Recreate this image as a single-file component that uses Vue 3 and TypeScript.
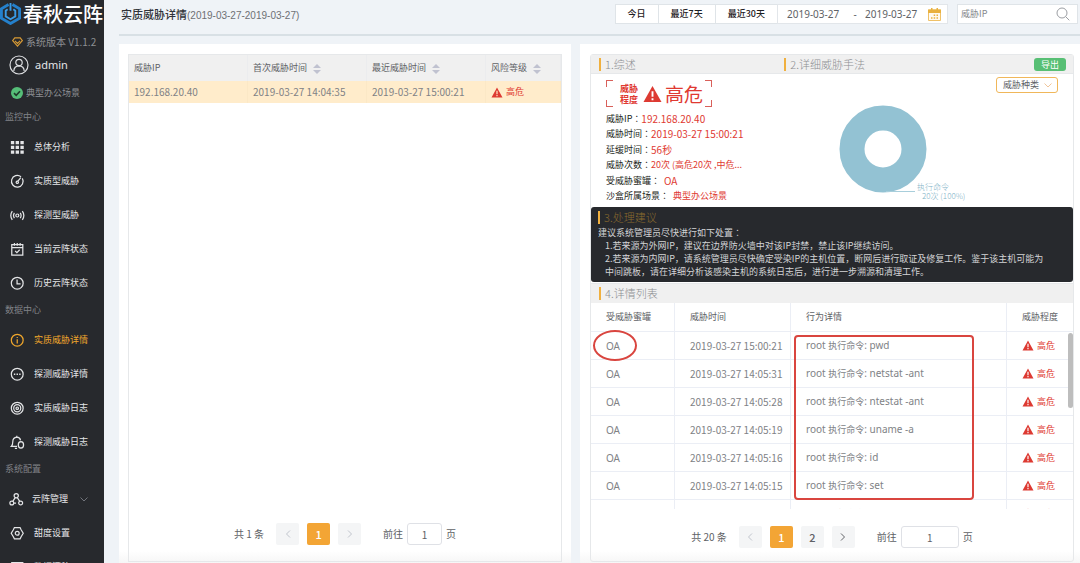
<script setup lang="ts">
import { ref } from 'vue'

interface MenuItem {
  text: string
  lines?: string
  solid?: string
  active?: boolean
  expandable?: boolean
}

interface MenuGroup {
  label: string
  items: MenuItem[]
}

const groups: MenuGroup[] = [
  {
    label: '监控中心',
    items: [
      {
        text: '总体分析',
        solid:
          'M1 1h3.8v3.8H1zM6.4 1h3.8v3.8H6.400zM11.8 1h3.8v3.8h-3.800zM1 6.400h3.8v3.800H1zM6.400 6.400h3.800v3.800H6.400zM11.800 6.400h3.800v3.800h-3.800zM1 11.800h3.800v3.800H1zM6.400 11.800h3.800v3.800H6.400zM11.800 11.800h3.800v3.800h-3.800z',
      },
      {
        text: '实质型威胁',
        lines:
          'M12.5 3.2A6.6 6.6 0 1 0 14 5M7 9.2a1.3 1.3 0 1 0 2.4-.4 1.3 1.3 0 0 0-2.4.4M9 8l3.2-4',
      },
      {
        text: '探测型威胁',
        lines:
          'M6.6 8.5a1.7 1.7 0 1 0 3.4 0 1.7 1.7 0 0 0-3.4 0M5 5.5Q3 8.5 5 11.5M11.6 5.5q2 3 0 6M2.6 3.6Q-.8 8.5 2.6 13.4M14 3.6q3.4 4.9 0 9.8',
      },
      {
        text: '当前云阵状态',
        lines: 'M2 3h12.5v11.8H2zM2 6.3h12.5M5 1.2v3M8.2 1.2v3M11.5 1.2v3M5.8 10l2 2 3.2-3.2',
      },
      {
        text: '历史云阵状态',
        lines: 'M1.5 8.2a6.7 6.7 0 1 0 13.4 0 6.7 6.7 0 0 0-13.4 0M8 4v4.8h4',
      },
    ],
  },
  {
    label: '数据中心',
    items: [
      {
        text: '实质威胁详情',
        active: true,
        lines: 'M1.5 8.2a6.7 6.7 0 1 0 13.4 0 6.7 6.7 0 0 0-13.4 0M8.2 7v5M8.2 4.4v1.4',
      },
      {
        text: '探测威胁详情',
        lines: 'M1.5 8.2a6.7 6.7 0 1 0 13.4 0 6.7 6.7 0 0 0-13.4 0',
        solid: 'M4.4 7.4H6V9H4.4zM7.4 7.4H9V9H7.4zM10.4 7.4H12V9h-1.6z',
      },
      {
        text: '实质威胁日志',
        lines:
          'M1.5 8.2a6.7 6.7 0 1 0 13.4 0 6.7 6.7 0 0 0-13.4 0M4.2 8.2a4 4 0 1 0 8 0 4 4 0 0 0-8 0M6.8 8.2a1.4 1.4 0 1 0 2.8 0 1.4 1.4 0 0 0-2.8 0',
      },
      {
        text: '探测威胁日志',
        lines:
          'M8 13H1.5Q3.2 11.500 3.2 7.500q0-4.500 4.500-5 3.600.2 4.300 3.500M7.700 2.500V.8M5.500 15.200h2.500M12.400 7.600q3 .2 3 3.600t-3 3.600q-3-.2-3-3.600t3-3.600',
      },
    ],
  },
  {
    label: '系统配置',
    items: [
      {
        text: '云阵管理',
        expandable: true,
        lines:
          'M5.8 4.200a2.400 2.400 0 1 0 4.800 0 2.400 2.400 0 0 0-4.800 0M1 12.500a2.200 2.200 0 1 0 4.400 0 2.200 2.200 0 0 0-4.400 0M11 12.500a2.200 2.200 0 1 0 4.400 0 2.200 2.200 0 0 0-4.400 0M7 6.300 4.300 10.600M9.400 6.300l2.800 4.300M5.400 12.500h2.600',
      },
      {
        text: '甜度设置',
        lines:
          'M5 1.8h6.4l1.2 2.4 2.4 4-2.4 4-1.2 2.4H5l-1.2-2.4-2.4-4 2.4-4zM6 8.2a2.2 2.2 0 1 0 4.4 0 2.2 2.2 0 0 0-4.4 0',
      },
      { text: '数据漂移', lines: 'M2 3h12.5v11H2zM5 7h6' },
    ],
  },
]

const ranges = ['今日', '最近7天', '最近30天']
const startDate = ref('2019-03-27')
const endDate = ref('2019-03-27')
const keyword = ref('')
const leftPage = ref('1')
const rightPage = ref('1')

const threats = [
  { ip: '192.168.20.40', first: '2019-03-27 14:04:35', last: '2019-03-27 15:00:21', level: '高危' },
]

const summary = [
  { label: '威胁IP', value: '192.168.20.40' },
  { label: '威胁时间', value: '2019-03-27 15:00:21' },
  { label: '延缓时间', value: '56秒' },
  { label: '威胁次数', value: '20次 (高危20次 ,中危...', cn: true },
  { label: '受威胁蜜罐', value: 'OA', spaced: true },
  { label: '沙盒所属场景', value: '典型办公场景', cn: true, spaced: true },
]

const details = [
  { time: '2019-03-27 15:00:21', cmd: 'pwd' },
  { time: '2019-03-27 14:05:31', cmd: 'netstat -ant' },
  { time: '2019-03-27 14:05:28', cmd: 'ntestat -ant' },
  { time: '2019-03-27 14:05:19', cmd: 'uname -a' },
  { time: '2019-03-27 14:05:16', cmd: 'id' },
  { time: '2019-03-27 14:05:15', cmd: 'set' },
  { time: '2019-03-27 14:05:12', cmd: 'ls' },
]

const warnShape = 'M10 1 19.5 18H.5zM9 6.5v6h2v-6zM9 14v2h2v-2z'
</script>

<template>
  <div class="app">
    <aside class="sidebar">
      <div class="logo">
        <svg class="logo-mark" viewBox="0 0 22 24" aria-hidden="true">
          <path d="M9 2.500 1.500 7v10l9.500 5.500L20.500 17V7L13 2.500" fill="none" stroke="#2480cc" stroke-width="3" />
          <path d="M8 7.500 6 9v6l5 3 5-3V9l-2-1.500M11 1v8" fill="none" stroke="#3a9be6" stroke-width="2" />
        </svg>
        <span>春秋云阵</span>
      </div>
      <div class="version">
        <svg class="gem" viewBox="0 0 12 11" fill="none" stroke="#d79a35" stroke-width="1.300" aria-hidden="true">
          <path d="M3 1h6l2.300 3L6 10 .7 4zM3.200 4.200 6 7l2.800-2.800" />
        </svg>
        <span>系统版本 V1.1.2</span>
      </div>
      <div class="user">
        <svg class="avatar" viewBox="0 0 20 20" fill="none" stroke="#dcdde0" stroke-width="1.200" aria-hidden="true">
          <circle cx="10" cy="10" r="9" />
          <circle cx="10" cy="7.500" r="3.200" />
          <path d="M4.800 16q.2-5 5.200-5.200 5 .2 5.200 5.200" />
        </svg>
        <span>admin</span>
      </div>
      <div class="scene">
        <svg class="tick" viewBox="0 0 12 12" aria-hidden="true">
          <circle cx="6" cy="6" r="6" fill="#55be78" />
          <path d="m3 6.200 2.200 2.100L9 4.200" fill="none" stroke="#1f3a2a" stroke-width="1.600" />
        </svg>
        <span>典型办公场景</span>
      </div>
      <nav>
        <template v-for="g in groups" :key="g.label">
          <div class="group-label">{{ g.label }}</div>
          <a
            v-for="m in g.items"
            :key="m.text"
            href="#"
            class="menu-item"
            :class="{ active: m.active, expandable: m.expandable }"
          >
            <svg class="menu-icon" viewBox="0 0 17 17" aria-hidden="true">
              <path v-if="m.lines" :d="m.lines" fill="none" stroke="currentColor" stroke-width="1.400" />
              <path v-if="m.solid" :d="m.solid" fill="currentColor" />
            </svg>
            <span>{{ m.text }}</span>
            <svg v-if="m.expandable" class="fold" viewBox="0 0 8 5" fill="none" stroke="#71747b" aria-hidden="true">
              <path d="m.5.5 3.500 3.500L7.500.5" />
            </svg>
          </a>
        </template>
      </nav>
    </aside>

    <main class="main">
      <header class="topbar">
        <h1>实质威胁详情<span>(2019-03-27-2019-03-27)</span></h1>
        <div class="tools">
          <div class="ranges">
            <button v-for="r in ranges" :key="r" type="button">{{ r }}</button>
          </div>
          <div class="dates">
            <input v-model="startDate" type="text" aria-label="开始日期" />
            <span>-</span>
            <input v-model="endDate" type="text" aria-label="结束日期" />
            <button type="button" aria-label="选择日期">
              <svg viewBox="0 0 13 13" aria-hidden="true">
                <path d="M.5 2h12v10.500H.5z" fill="#fffaf0" stroke="#efc168" />
                <path d="M0 1.500h13V5H0zM3 0h1.500v2H3zM8.500 0H10v2H8.500z" fill="#e9b13f" />
                <path d="M8.500 6.500H10V8H8.500zM5.700 6.500h1.500V8H5.700zM3 9.200h1.500v1.500H3zM5.700 9.200h1.500v1.500H5.700zM8.500 9.200H10v1.500H8.500z" fill="#e9b13f" />
              </svg>
            </button>
          </div>
          <div class="search">
            <input v-model="keyword" type="text" placeholder="威胁IP" aria-label="威胁IP" />
            <button type="button" aria-label="搜索">
              <svg viewBox="0 0 14 14" fill="none" stroke="#9b9ea3" aria-hidden="true">
                <circle cx="6" cy="6" r="5" />
                <path d="m9.700 9.700 3.600 3.600" />
              </svg>
            </button>
          </div>
        </div>
      </header>

      <div class="columns">
        <section class="card">
          <div class="box">
            <table class="threats">
              <thead>
                <tr>
                  <th>威胁IP</th>
                  <th v-for="h in ['首次威胁时间', '最近威胁时间', '风险等级']" :key="h">
                    {{ h }}
                    <svg class="sort" viewBox="0 0 8 10" fill="#c0c2d0" aria-hidden="true">
                      <path d="M4 0 8 4H0zM4 10 0 6h8z" />
                    </svg>
                  </th>
                </tr>
              </thead>
              <tbody>
                <tr v-for="t in threats" :key="t.ip">
                  <td>{{ t.ip }}</td>
                  <td>{{ t.first }}</td>
                  <td>{{ t.last }}</td>
                  <td>
                    <span class="level">
                      <svg viewBox="0 0 20 19" aria-hidden="true"><path :d="warnShape" fill-rule="evenodd" /></svg>{{ t.level }}
                    </span>
                  </td>
                </tr>
              </tbody>
            </table>
            <div class="pager">
              <span class="total">共 1 条</span>
              <button type="button" disabled aria-label="上一页">
                <svg viewBox="0 0 6 8" aria-hidden="true"><path d="M5 .5 1.500 4 5 7.500" /></svg>
              </button>
              <button type="button" class="current">1</button>
              <button type="button" disabled aria-label="下一页">
                <svg viewBox="0 0 6 8" aria-hidden="true"><path d="M1 .5 4.500 4 1 7.500" /></svg>
              </button>
              <label class="jump">前往<input v-model="leftPage" type="text" />页</label>
            </div>
          </div>
        </section>

        <section class="card">
          <div class="box framed">
            <div class="overview-head">
              <h2>1.综述</h2>
              <h2>2.详细威胁手法</h2>
              <button type="button" class="export">导出</button>
            </div>
            <div class="overview">
              <div class="facts">
                <div class="badge">
                  <i class="corner tl"></i><i class="corner tr"></i><i class="corner bl"></i><i class="corner br"></i>
                  <span class="badge-label">威胁<br />程度</span>
                  <svg viewBox="0 0 20 19" aria-hidden="true"><path :d="warnShape" fill-rule="evenodd" /></svg>
                  <strong>高危</strong>
                </div>
                <dl>
                  <div v-for="s in summary" :key="s.label">
                    <dt>{{ s.label }}<span class="colon">：</span></dt>
                    <dd :class="{ cn: s.cn, spaced: s.spaced }">{{ s.value }}</dd>
                  </div>
                </dl>
              </div>
              <div class="methods">
                <svg class="donut" viewBox="0 0 150 100" role="img" aria-label="执行命令 20次 (100%)">
                  <circle cx="47" cy="47" r="31" fill="none" stroke="#93c2d3" stroke-width="25" />
                  <path d="M50 89.500h29" stroke="#a8cedb" />
                  <text x="81" y="88">执行命令</text>
                  <text x="86" y="97">20次 (100%)</text>
                </svg>
                <div class="kind">
                  <select aria-label="威胁种类">
                    <option>威胁种类</option>
                  </select>
                  <svg viewBox="0 0 8 5" fill="none" stroke="#f0c59a" aria-hidden="true"><path d="m.5.5 3.500 3.500L7.500.5" /></svg>
                </div>
              </div>
            </div>

            <div class="advice">
              <h2>3.处理建议</h2>
              <p>建议系统管理员尽快进行如下处置<span class="colon">：</span></p>
              <ul>
                <li>1.若来源为外网IP，建议在边界防火墙中对该IP封禁，禁止该IP继续访问。</li>
                <li>2.若来源为内网IP，请系统管理员尽快确定受染IP的主机位置，断网后进行取证及修复工作。鉴于该主机可能为中间跳板，请在详细分析该感染主机的系统日志后，进行进一步溯源和清理工作。</li>
              </ul>
            </div>

            <div class="list-head"><h2>4.详情列表</h2></div>
            <div class="list">
              <table class="details">
                <thead>
                  <tr>
                    <th class="c-pot">受威胁蜜罐</th>
                    <th class="c-time">威胁时间</th>
                    <th>行为详情</th>
                    <th class="c-level">威胁程度</th>
                  </tr>
                </thead>
                <tbody>
                  <tr v-for="d in details" :key="d.time">
                    <td class="latin">OA</td>
                    <td>{{ d.time }}</td>
                    <td class="latin">root <span class="cn">执行命令</span>: {{ d.cmd }}</td>
                    <td>
                      <span class="level">
                        <svg viewBox="0 0 20 19" aria-hidden="true"><path :d="warnShape" fill-rule="evenodd" /></svg>高危
                      </span>
                    </td>
                  </tr>
                </tbody>
              </table>
              <i class="thumb"></i>
              <i class="mark-oval"></i>
              <i class="mark-box"></i>
            </div>
            <div class="pager wide">
              <span class="total">共 20 条</span>
              <button type="button" disabled aria-label="上一页">
                <svg viewBox="0 0 6 8" aria-hidden="true"><path d="M5 .5 1.500 4 5 7.500" /></svg>
              </button>
              <button type="button" class="current">1</button>
              <button type="button">2</button>
              <button type="button" aria-label="下一页">
                <svg viewBox="0 0 6 8" aria-hidden="true"><path d="M1 .5 4.500 4 1 7.500" /></svg>
              </button>
              <label class="jump">前往<input v-model="rightPage" type="text" />页</label>
            </div>
          </div>
        </section>
      </div>
    </main>
  </div>
</template>

<style>
body {
  margin: 0;
  background: #eff3f7;
}
</style>

<style scoped>
* {
  box-sizing: border-box;
}
.app {
  display: flex;
  height: 100vh;
  overflow: hidden;
  font: 9px/14px 'Noto Sans CJK SC', 'Noto Sans', sans-serif;
  color: #606266;
}
button,
input,
select {
  font: inherit;
  color: inherit;
  margin: 0;
  padding: 0;
  border: 0;
  background: none;
  outline: 0;
}
svg {
  flex: none;
}
h1,
h2,
p,
ul,
dl,
dd {
  margin: 0;
  padding: 0;
}
.colon {
  font-family: 'Noto Sans CJK TC', sans-serif;
}

/* sidebar */
.sidebar {
  flex: none;
  width: 104px;
  overflow: hidden;
  background: #27292d;
  color: #e4e5e7;
}
.logo {
  display: flex;
  align-items: center;
  gap: 2px;
  height: 27px;
  font-size: 20px;
  line-height: 27px;
  font-weight: 500;
  color: #fff;
  white-space: nowrap;
}
.logo-mark {
  width: 21px;
  height: 23px;
}
.version {
  display: flex;
  align-items: center;
  gap: 3px;
  height: 30px;
  padding-left: 12px;
  font-size: 10px;
  color: #8d8f93;
  white-space: nowrap;
}
.gem {
  width: 11px;
  height: 10px;
}
.user {
  display: flex;
  align-items: center;
  gap: 6px;
  height: 16px;
  padding-left: 9px;
  font: 11px/16px 'Noto Sans', sans-serif;
}
.avatar {
  width: 20px;
  height: 20px;
}
.scene {
  display: flex;
  align-items: center;
  gap: 3px;
  height: 34px;
  padding: 6px 0 0 11px;
  color: #8d8f93;
}
.tick {
  width: 12px;
  height: 12px;
}
.group-label {
  height: 23px;
  padding-left: 5px;
  line-height: 20px;
  color: #808287;
}
.menu-item {
  display: flex;
  align-items: center;
  gap: 9px;
  height: 34px;
  padding-left: 10px;
  color: inherit;
  text-decoration: none;
  white-space: nowrap;
}
.menu-item.active {
  color: #f0a72c;
}
.menu-item.expandable {
  gap: 8px;
  padding-left: 9px;
}
.menu-icon {
  width: 15px;
  height: 15px;
}
.fold {
  width: 8px;
  height: 5px;
  margin-left: 4px;
}

/* top bar */
.main {
  flex: 1;
  min-width: 0;
  display: flex;
  flex-direction: column;
  padding-left: 15px;
}
.topbar {
  display: flex;
  justify-content: space-between;
  height: 36px;
  padding: 4px 2px 0;
  border-bottom: 2px solid #d8e0e5;
}
h1 {
  font-size: 11px;
  line-height: 20px;
  font-weight: 500;
  color: #303338;
  white-space: nowrap;
}
h1 span {
  font: 10px/20px 'Liberation Sans', sans-serif;
  color: #6d7074;
}
.tools {
  display: flex;
  height: 20px;
}
.ranges {
  display: flex;
}
.ranges button {
  padding: 0 12px;
  border: 1px solid #dfe4e8;
  border-right-width: 0;
  background: #fff;
  color: #1e2023;
  font-weight: 500;
}
.dates {
  display: flex;
  align-items: center;
  padding: 0 6px 0 9px;
  border: 1px solid #e2e6ea;
  background: #fff;
  font: 10px/16px 'Noto Sans', sans-serif;
}
.dates input {
  width: 58px;
}
.dates span {
  width: 20px;
  text-align: center;
}
.dates button {
  display: flex;
  margin-left: 5px;
}
.dates svg {
  width: 13px;
  height: 13px;
}
.search {
  display: flex;
  align-items: center;
  width: 121px;
  margin-left: 9px;
  padding: 0 7px 0 3px;
  border: 1px solid #dfe4e8;
  background: #fff;
}
.search input {
  flex: 1;
  min-width: 0;
}
.search input::placeholder {
  color: #85888d;
  opacity: 1;
}
.search button {
  display: flex;
}
.search svg {
  width: 14px;
  height: 14px;
}

/* cards */
.columns {
  flex: 1;
  min-height: 0;
  display: grid;
  grid-template-columns: 452fr 500fr;
  gap: 9px;
  padding-top: 8px;
}
.card {
  display: flex;
  min-width: 0;
  min-height: 0;
  padding: 10px 9px 1px;
  background: linear-gradient(to top, #f6f6f6, #fff 12px);
}
.card + .card {
  padding: 10px 6px 1px 10px;
}
.box {
  flex: 1;
  min-width: 0;
  display: flex;
  flex-direction: column;
  justify-content: space-between;
  border: 1px solid #e6e8ea;
}
table {
  width: 100%;
  border-collapse: separate;
  border-spacing: 0;
  table-layout: fixed;
}
th,
td {
  padding: 0;
  text-align: left;
  font-weight: 400;
  white-space: nowrap;
}
td {
  font-size: 10px;
  color: #808286;
}
.threats th {
  height: 26px;
  padding-left: 5px;
  background: #f0f0f0;
  border-right: 1px solid #ebecee;
}
.threats th:last-child {
  width: 75px;
}
.threats td {
  height: 22px;
  padding-left: 5px;
  background: #ffeccb;
  border-right: 1px solid #fbe8c6;
}
.sort {
  width: 8px;
  height: 10px;
  margin-left: 4px;
  vertical-align: middle;
}
.level {
  display: flex;
  align-items: center;
  gap: 3px;
  font-size: 9px;
  color: #e03a32;
}
.level svg {
  width: 12px;
  height: 11px;
  fill: #dd3a32;
}

/* pager */
.pager {
  flex: none;
  display: flex;
  justify-content: center;
  align-items: center;
  gap: 8px;
  padding-bottom: 16px;
  font-size: 10px;
}
.pager.wide {
  padding: 17px 0 13px;
}
.total {
  margin-right: 4px;
}
.pager button {
  display: flex;
  align-items: center;
  justify-content: center;
  width: 23px;
  height: 22px;
  border-radius: 2px;
  background: #f4f5f6;
  font-size: 11px;
  font-weight: 500;
}
.pager button.current {
  background: #f3a535;
  color: #fff;
}
.pager button svg {
  width: 6px;
  height: 8px;
  fill: none;
  stroke: #606266;
}
.pager button:disabled svg {
  stroke: #c0c4cc;
}
.jump {
  display: flex;
  align-items: center;
  gap: 4px;
  margin-left: 14px;
}
.jump input {
  width: 35px;
  height: 22px;
  border: 1px solid #dfe1e6;
  border-radius: 3px;
  background: #fff;
  text-align: center;
}
.wide .jump input {
  width: 58px;
}

/* overview */
h2 {
  padding-left: 4px;
  border-left: 2px solid #f0b03f;
  font-size: 11px;
  line-height: 13px;
  font-weight: 300;
  color: #8d8f92;
}
.framed {
  border-radius: 3px;
  justify-content: flex-start;
}
.overview-head {
  flex: none;
  display: grid;
  grid-template-columns: 39% 1fr auto;
  align-items: center;
  height: 19px;
  padding-right: 7px;
  border-bottom: 1px solid #e6e8ea;
  background: #f0f0f0;
}
.overview-head h2,
.list-head h2 {
  margin-left: 8px;
}
.export {
  width: 32px;
  height: 13px;
  border-radius: 3px;
  background: #57bf74;
  color: #fff;
  line-height: 13px;
}
.overview {
  flex: none;
  display: grid;
  grid-template-columns: 39% 1fr;
  height: 133px;
}
.facts {
  display: flex;
  flex-direction: column;
  gap: 4px;
  padding: 6px 0 3px 15px;
}
.badge {
  position: relative;
  display: flex;
  align-items: center;
  width: 106px;
  height: 27px;
  padding-left: 14px;
  color: #e03a32;
}
.badge-label {
  font-size: 9px;
  line-height: 11px;
  font-weight: 700;
}
.badge svg {
  width: 19px;
  height: 18px;
  margin: 0 3px 0 5px;
  fill: #dd3a32;
}
.badge strong {
  font-size: 19px;
  line-height: 22px;
  font-weight: 400;
}
.corner {
  position: absolute;
  width: 7px;
  height: 7px;
  border: 0 solid #d9605a;
}
.tl {
  top: 0;
  left: 0;
  border-width: 1px 0 0 1px;
}
.tr {
  top: 0;
  right: 0;
  border-width: 1px 1px 0 0;
}
.bl {
  bottom: 0;
  left: 0;
  border-width: 0 0 1px 1px;
}
.br {
  bottom: 0;
  right: 0;
  border-width: 0 1px 1px 0;
}
dl {
  flex: 1;
  display: flex;
  flex-direction: column;
  justify-content: space-between;
}
dl div {
  display: flex;
  align-items: center;
  height: 15px;
  white-space: nowrap;
}
dt {
  color: #1d1f22;
}
dd {
  font-size: 10px;
  color: #e03a32;
}
dd.cn {
  font-size: 9px;
}
dd.spaced {
  padding-left: 4px;
}
.cn {
  font-size: 9px;
}
.methods {
  display: flex;
  justify-content: space-between;
  align-items: flex-start;
  padding: 3px 15px 0 57px;
}
.donut {
  width: 150px;
  height: 100px;
  margin-top: 25px;
}
.donut text {
  font-size: 8px;
  font-weight: 300;
  fill: #7fb2c6;
}
.kind {
  position: relative;
}
.kind select {
  display: block;
  appearance: none;
  width: 62px;
  height: 16px;
  padding-left: 6px;
  border: 1px solid #f0b75a;
  border-radius: 3px;
  background: #fff;
  line-height: 14px;
}
.kind svg {
  position: absolute;
  right: 6px;
  top: 6px;
  width: 8px;
  height: 5px;
  pointer-events: none;
}

/* advice */
.advice {
  flex: none;
  height: 75px;
  padding: 4px 23px 0 7px;
  border-radius: 3px;
  background: #27292d;
  color: #d3d4d6;
  line-height: 13px;
}
.advice h2 {
  margin-bottom: 2px;
  color: #8a6a2e;
}
.advice ul {
  padding-left: 7px;
  list-style: none;
}

/* detail list */
.list-head {
  flex: none;
  display: flex;
  align-items: center;
  height: 20px;
  margin-top: 1px;
  border-top: 1px solid #e6e8ea;
  background: #f0f0f0;
}
.list {
  position: relative;
  flex: 1;
  min-height: 0;
  overflow: hidden;
}
.details th {
  height: 29px;
  padding-left: 15px;
}
.details td {
  height: 28px;
  padding-left: 15px;
}
.details th,
.details td {
  border-right: 1px solid #ebeef5;
  border-bottom: 1px solid #ebeef5;
}
.details th:last-child,
.details td:last-child {
  border-right: 0;
}
.c-pot {
  width: 84px;
}
.c-time {
  width: 116px;
}
.c-level {
  width: 66px;
}
td.latin {
  font-family: 'Noto Sans', 'Noto Sans CJK SC', sans-serif;
}
.thumb {
  position: absolute;
  top: 30px;
  right: 0;
  width: 5px;
  height: 75px;
  border-radius: 3px;
  background: #bdbdbd;
}
.mark-oval {
  position: absolute;
  top: 27px;
  left: 2px;
  width: 44px;
  height: 31px;
  border: 2px solid #d9453f;
  border-radius: 50%;
}
.mark-box {
  position: absolute;
  top: 32px;
  left: 203px;
  right: 99px;
  height: 165px;
  border: 2px solid #d9453f;
  border-radius: 4px;
}
</style>
